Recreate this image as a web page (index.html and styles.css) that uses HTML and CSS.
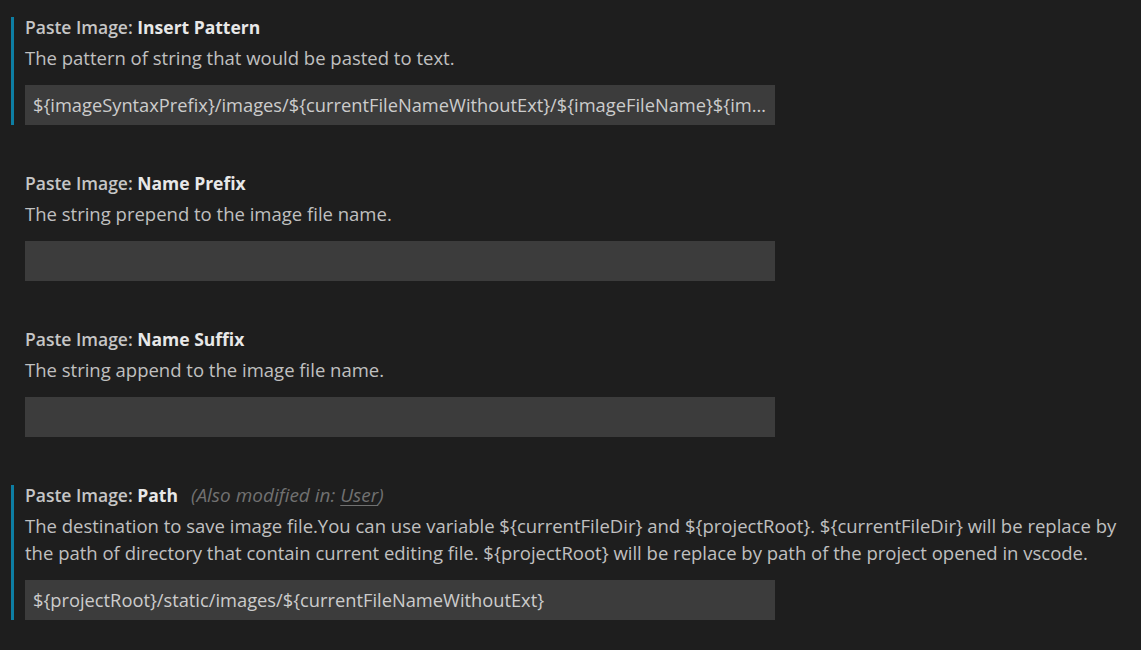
FILE: index.html
```html
<!DOCTYPE html>
<html lang="en">
<head>
<meta charset="utf-8">
<title>Settings</title>
<link rel="stylesheet" href="styles.css">
</head>
<body>
<div class="settings">
  <div class="setting modified">
    <div class="title"><span class="category">Paste Image: </span><span class="label">Insert Pattern</span></div>
    <div class="desc">The pattern of string that would be pasted to text.</div>
    <div class="input">${imageSyntaxPrefix}/images/${currentFileNameWithoutExt}/${imageFileName}${im…</div>
  </div>
  <div class="setting">
    <div class="title"><span class="category">Paste Image: </span><span class="label">Name Prefix</span></div>
    <div class="desc">The string prepend to the image file name.</div>
    <div class="input"></div>
  </div>
  <div class="setting">
    <div class="title"><span class="category">Paste Image: </span><span class="label">Name Suffix</span></div>
    <div class="desc">The string append to the image file name.</div>
    <div class="input"></div>
  </div>
  <div class="setting modified">
    <div class="title"><span class="category">Paste Image: </span><span class="label">Path</span><span class="also">(Also modified in: <u>User</u>)</span></div>
    <div class="desc">The destination to save image file.You can use variable ${currentFileDir} and ${projectRoot}. ${currentFileDir} will be replace by the path of directory that contain current editing file. ${projectRoot} will be replace by path of the project opened in vscode.</div>
    <div class="input">${projectRoot}/static/images/${currentFileNameWithoutExt}</div>
  </div>
</div>
</body>
</html>
```
FILE: styles.css
```css
html, body {
  margin: 0;
  padding: 0;
  background: #1e1e1e;
  height: 100%;
}
body {
  font-family: "Open Sans", "Noto Sans", sans-serif;
  font-size: 18.5px;
  color: #cccccc;
  overflow: hidden;
}
.settings {
  padding-top: 17px;
  display: flex;
  flex-direction: column;
  gap: 48px;
}
.setting {
  margin-left: 11px;
  border-left: 3px solid transparent;
  padding-left: 11px;
  padding-right: 22px;
}
.setting.modified {
  border-left-color: #0d7ea3;
}
.title {
  height: 20px;
  line-height: 20px;
  margin-bottom: 7px;
  white-space: nowrap;
  font-size: 17.5px;
}
.category {
  color: #c6c6c6;
  font-weight: 600;
}
.label {
  color: #e8e8e8;
  font-weight: 700;
}
.also {
  margin-left: 13px;
  font-style: italic;
  color: #717171;
  font-size: 19px;
}
.also u {
  text-decoration-thickness: 1px;
  text-underline-offset: 3px;
}
.desc {
  line-height: 27px;
  color: #c0c0c0;
  margin-bottom: 14px;
}
.input {
  width: 750px;
  height: 40px;
  line-height: 40px;
  box-sizing: border-box;
  padding: 0 8px;
  background: #3c3c3c;
  color: #cccccc;
  font-size: 18.3px;
  white-space: nowrap;
  overflow: hidden;
  text-overflow: ellipsis;
}
```
